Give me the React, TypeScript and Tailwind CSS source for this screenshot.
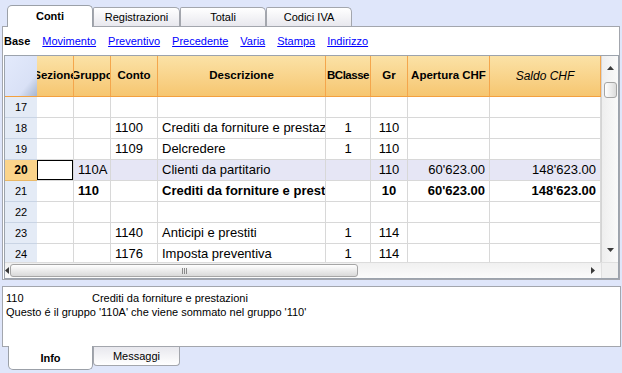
import React from 'react';

type Col = { key: string; label: string; w: string; align: string; italic?: boolean; tight?: boolean };

const cols: Col[] = [
  { key: 'sez', label: 'Sezione', w: 'w-[37px]', align: 'justify-start' },
  { key: 'gru', label: 'Gruppo', w: 'w-[37px]', align: 'justify-start' },
  { key: 'con', label: 'Conto', w: 'w-[47px]', align: 'justify-start' },
  { key: 'des', label: 'Descrizione', w: 'w-[168px]', align: 'justify-start' },
  { key: 'bcl', label: 'BClasse', w: 'w-[45px]', align: 'justify-center', tight: true },
  { key: 'gr', label: 'Gr', w: 'w-[37px]', align: 'justify-center' },
  { key: 'ape', label: 'Apertura CHF', w: 'w-[82px]', align: 'justify-end' },
  { key: 'sal', label: 'Saldo CHF', w: 'w-[111px]', align: 'justify-end', italic: true },
];

type Row = { n: number; cells: Record<string, string>; bold?: boolean; active?: boolean };

const rows: Row[] = [
  { n: 17, cells: {} },
  { n: 18, cells: { con: '1100', des: 'Crediti da forniture e prestazioni', bcl: '1', gr: '110' } },
  { n: 19, cells: { con: '1109', des: 'Delcredere', bcl: '1', gr: '110' } },
  { n: 20, active: true, cells: { gru: '110A', des: 'Clienti da partitario', gr: '110', ape: "60'623.00", sal: "148'623.00" } },
  { n: 21, bold: true, cells: { gru: '110', des: 'Crediti da forniture e prestazioni', gr: '10', ape: "60'623.00", sal: "148'623.00" } },
  { n: 22, cells: {} },
  { n: 23, cells: { con: '1140', des: 'Anticipi e prestiti', bcl: '1', gr: '114' } },
  { n: 24, cells: { con: '1176', des: 'Imposta preventiva', bcl: '1', gr: '114' } },
];

const links = ['Movimento', 'Preventivo', 'Precedente', 'Varia', 'Stampa', 'Indirizzo'];

function Tri({ dir }: { dir: 'up' | 'down' | 'left' | 'right' }) {
  const pts = {
    up: '0,4 7,4 3.5,0',
    down: '0,0 7,0 3.5,4',
    left: '4,0 4,7 0,3.5',
    right: '0,0 0,7 4,3.5',
  }[dir];
  const vert = dir === 'up' || dir === 'down';
  return (
    <svg width={vert ? 7 : 4} height={vert ? 4 : 7} className="block">
      <polygon points={pts} fill="#3a3a3a" />
    </svg>
  );
}

export default function App() {
  return (
    <div className="w-[622px] h-[373px] overflow-hidden bg-[#dfe6fa] font-['Liberation_Sans',Arial,sans-serif] text-black">
      {/* tabs */}
      <div className="h-[26px] flex items-end pl-[7px]">
        <div className="relative z-10 -mb-px w-[86px] h-[22px] bg-white border border-b-0 border-[#9ba0a8] rounded-t-[5px] flex items-center justify-center text-[11px] font-bold pb-[1px]">
          Conti
        </div>
        {[
          ['Registrazioni', 'w-[87px]'],
          ['Totali', 'w-[86px]'],
          ['Codici IVA', 'w-[86px]'],
        ].map(([t, w]) => (
          <div
            key={t}
            className={`${w} h-[19px] bg-linear-to-b from-white to-[#e8e8ee] border border-b-0 border-[#a3a6ad] rounded-tr-[5px] rounded-tl-[2px] flex items-center justify-center text-[11px]`}
          >
            {t}
          </div>
        ))}
      </div>

      {/* main panel */}
      <div className="ml-[2px] w-[618px] h-[254px] bg-white border border-[#a3a6ad] flex flex-col">
        <div className="h-[28px] flex items-center gap-[12px] pl-[1px] text-[11px]">
          <span className="font-bold">Base</span>
          {links.map(l => (
            <a key={l} href="#" className="text-[#0000ff] underline">
              {l}
            </a>
          ))}
        </div>

        <div className="ml-px w-[615px] h-[224px] border border-[#9ca3ad] flex flex-col">
          <div className="flex h-[206px]">
            <div className="w-[596px] flex flex-col">
              {/* header */}
              <div className="flex h-[41px] border-b border-[#f3a03f]">
                <div className="w-[32px] h-full bg-linear-to-br from-[#e3eafc] via-[#d9e1f6] via-70% to-[#a7b6d0]" />
                {cols.map(c => (
                  <div
                    key={c.key}
                    className={`${c.w} relative h-full shrink-0 border-r border-[#f4a64c] bg-linear-to-b from-[#fbe2a6] to-[#f6c670] overflow-hidden whitespace-nowrap ${
                      c.italic ? 'italic font-normal text-[12px]' : 'font-bold text-[11.5px]'
                    } ${c.tight ? 'tracking-[-0.5px]' : ''}`}
                  >
                    {/* wider box so that long labels clip on both sides */}
                    <div className="absolute inset-y-0 -left-[20px] -right-[20px] flex items-center justify-center">
                      {c.label}
                    </div>
                  </div>
                ))}
              </div>
              {/* body */}
              <div className="h-[165px] overflow-hidden">
                {rows.map(r => (
                  <div key={r.n} className="flex h-[21px] text-[13px]">
                    <div
                      className={`w-[32px] shrink-0 h-full border-b flex items-center justify-center ${
                        r.active
                          ? 'bg-[#fbd48b] border-[#e9b866] font-bold text-[12px]'
                          : 'bg-[#e4ebf6] border-[#c9d4e4] text-[11px]'
                      }`}
                    >
                      {r.n}
                    </div>
                    {cols.map(c => {
                      const sel = r.active && c.key === 'sez';
                      return (
                        <div
                          key={c.key}
                          className={`${c.w} shrink-0 h-full border-r border-b border-[#d8d8d8] px-[4px] flex items-center ${c.align} overflow-clip whitespace-nowrap ${
                            r.bold ? 'font-bold' : ''
                          } ${sel ? 'bg-white shadow-[inset_0_0_0_1px_#000]' : r.active ? 'bg-[#e6e6f5]' : ''}`}
                        >
                          {r.cells[c.key] ?? ''}
                        </div>
                      );
                    })}
                  </div>
                ))}
              </div>
            </div>
            {/* vertical scrollbar */}
            <div className="w-[17px] h-full border-l border-[#d4d4d4] bg-linear-to-r from-[#eeeeee] to-[#fafafa] flex flex-col items-center">
              <div className="h-[14px] flex items-end">
                <Tri dir="up" />
              </div>
              <div className="mt-[12px] w-[13px] h-[16px] rounded-[3px] border border-[#a5a5a5] bg-linear-to-r from-white to-[#dcdcdc]" />
              <div className="flex-1" />
              <div className="h-[14px] flex items-start">
                <Tri dir="down" />
              </div>
            </div>
          </div>
          {/* horizontal scrollbar */}
          <div className="flex h-[16px]">
            <div className="w-[596px] h-full border-t border-[#dcdcdc] bg-linear-to-b from-[#f0f0f0] to-[#fbfbfb] flex items-center">
              <div className="w-[4px] flex justify-center">
                <Tri dir="left" />
              </div>
              <div className="ml-[1px] w-[348px] h-[13px] rounded-[3px] border border-[#a5a5a5] bg-linear-to-b from-white to-[#d9d9d9] flex items-center justify-center gap-[1px]">
                <span className="w-px h-[6px] bg-[#8a8a8a]" />
                <span className="w-px h-[6px] bg-[#8a8a8a]" />
                <span className="w-px h-[6px] bg-[#8a8a8a]" />
              </div>
              <div className="flex-1" />
              <div className="w-[8px] mr-[2px]">
                <Tri dir="right" />
              </div>
            </div>
            <div className="w-[17px] h-full bg-[#f0f0f0] border-l border-t border-[#e0e0e0]" />
          </div>
        </div>
      </div>

      <div className="h-[6px]" />

      {/* info panel */}
      <div className="ml-[2px] w-[619px] h-[61px] bg-white border border-[#a3a6ad] px-[3px] pt-[4px] text-[11px] leading-[14px]">
        <div className="flex">
          <span className="w-[86px]">110</span>
          <span>Crediti da forniture e prestazioni</span>
        </div>
        <div>Questo é il gruppo '110A' che viene sommato nel gruppo '110'</div>
      </div>

      {/* bottom tabs */}
      <div className="flex items-start pl-[8px]">
        <div className="relative z-10 -mt-px w-[85px] h-[24px] bg-white border border-t-0 border-[#9ba0a8] rounded-b-[5px] flex items-center justify-center pt-[2px] text-[11px] font-bold">
          Info
        </div>
        <div className="w-[87px] h-[19px] bg-linear-to-t from-white to-[#e8e8ee] border border-t-0 border-[#a3a6ad] rounded-b-[4px] flex items-center justify-center text-[11px]">
          Messaggi
        </div>
      </div>
    </div>
  );
}
